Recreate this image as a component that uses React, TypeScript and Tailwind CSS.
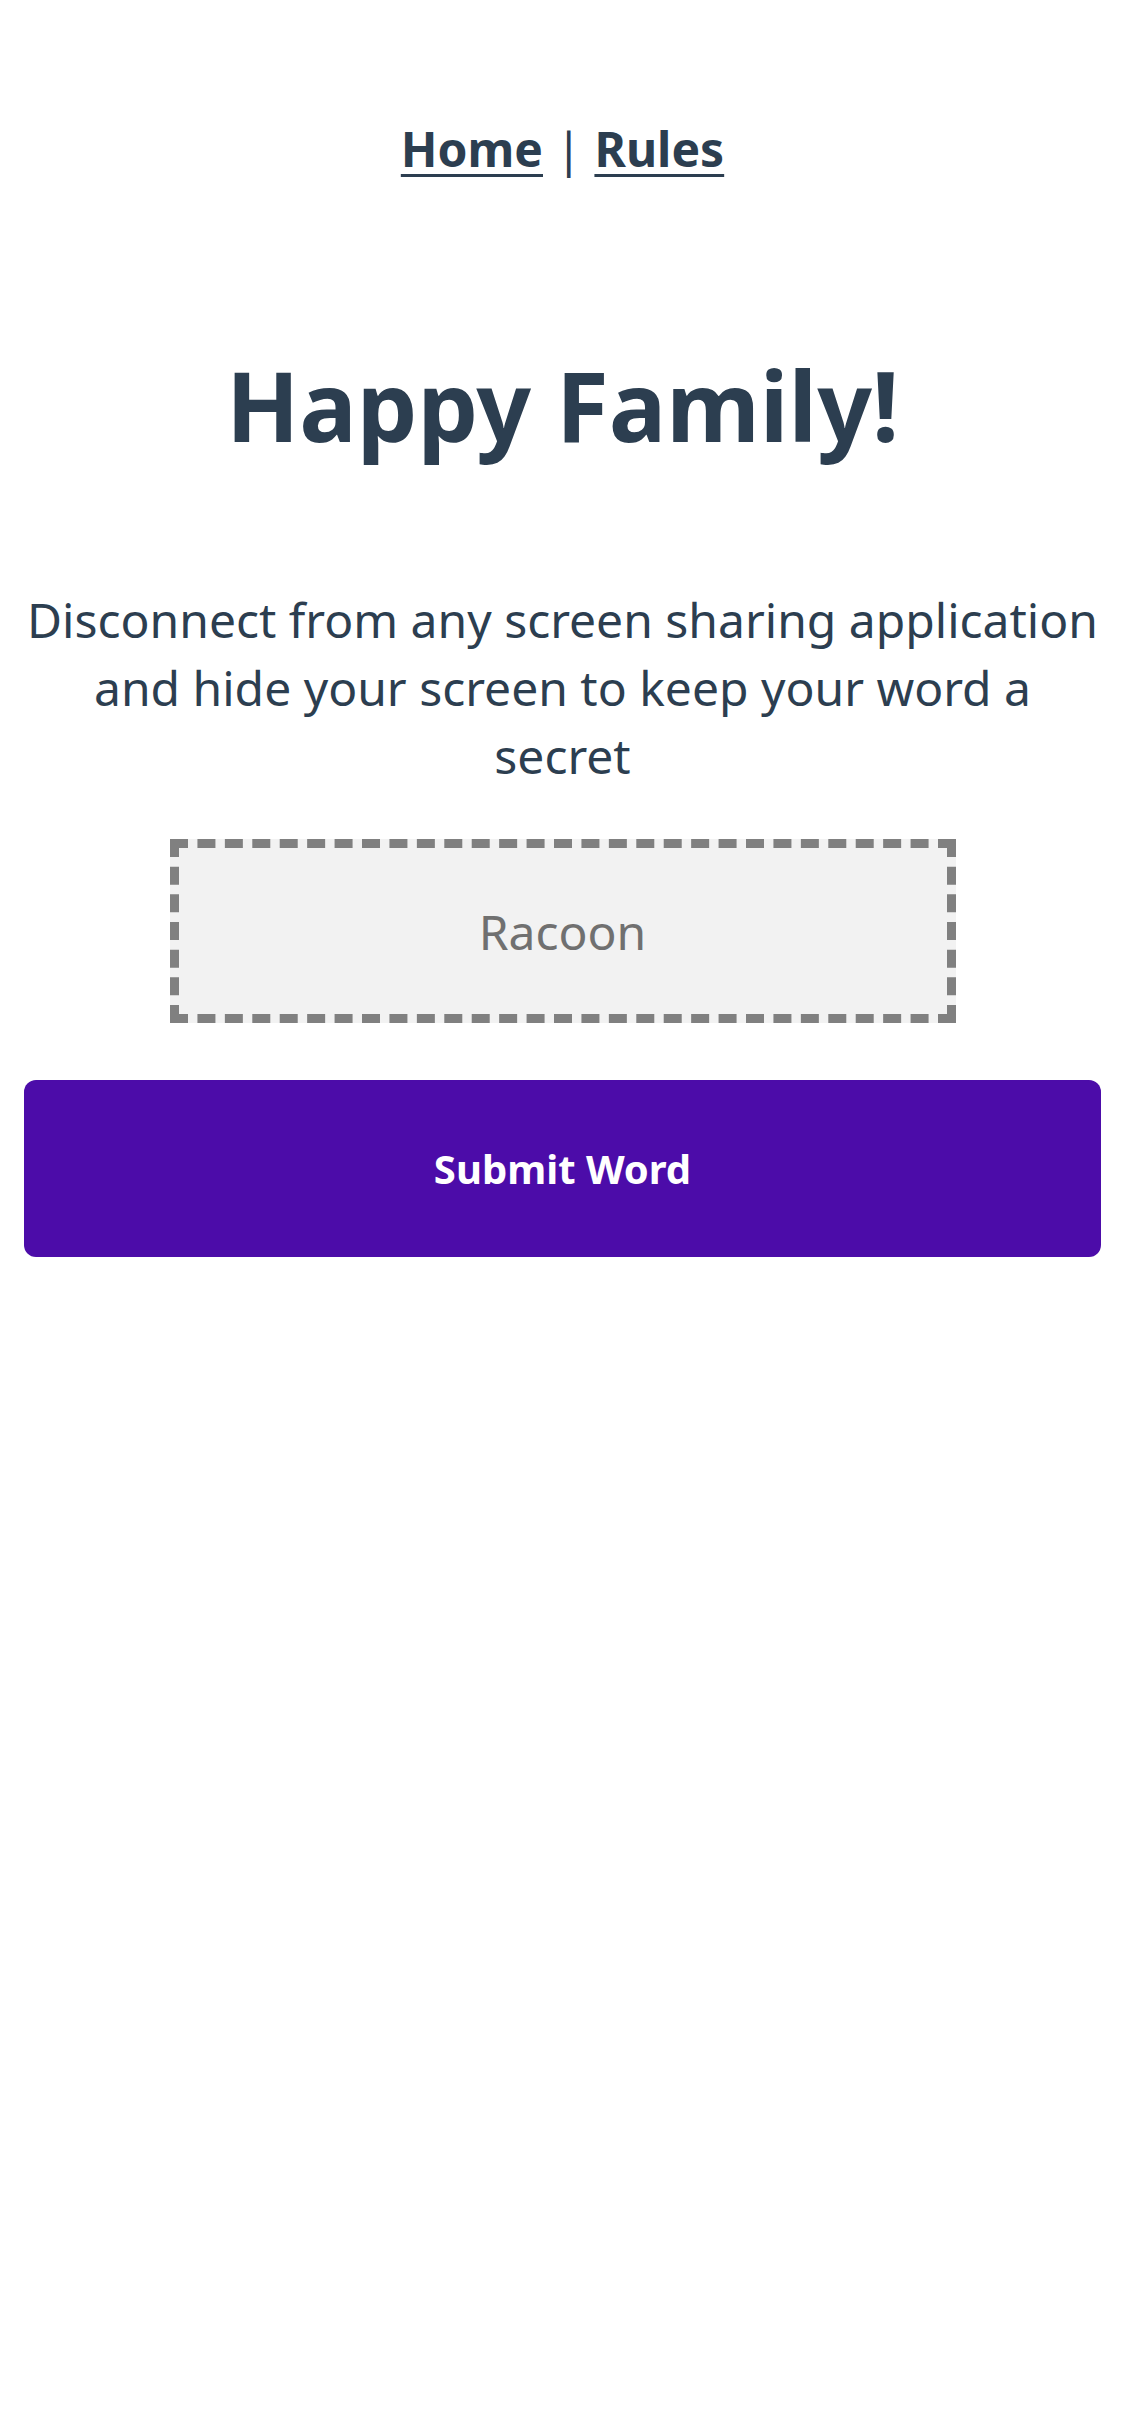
import React from "react";

export default function App() {
  return (
    <div
      className="min-h-[2436px] bg-white p-6 text-[#2c3e50]"
      style={{ fontFamily: '"Noto Sans", "Open Sans", sans-serif' }}
    >
      <nav className="pt-[92px] pb-[88px] text-center text-[48px] leading-[65px]">
        <a href="#" className="font-bold text-[#2c3e50] underline underline-offset-[7px] decoration-[3px]">
          Home
        </a>
        <span> | </span>
        <a href="#" className="font-bold text-[#2c3e50] underline underline-offset-[7px] decoration-[3px]">
          Rules
        </a>
      </nav>
      <h1 className="mt-[70px] text-center text-[96px] font-bold leading-[131px]">Happy Family!</h1>
      <p className="mt-[116px] text-center text-[48px] leading-[68px]">
        Disconnect from any screen sharing application and hide your screen to keep your word a secret
      </p>
      <div className="mt-[49px] flex justify-center">
        <input
          type="text"
          placeholder="Racoon"
          className="h-[184px] w-[786px] shrink-0 border-[9px] border-dashed border-[#808080] bg-[#f2f2f2] text-center text-[48px] text-[#2c3e50] outline-none placeholder:text-[#707070]"
        />
      </div>
      <button className="mt-[57px] flex h-[177px] w-full items-center justify-center rounded-[12px] bg-[#4c0ca9] text-[40px] font-bold text-white">
        Submit Word
      </button>
    </div>
  );
}
